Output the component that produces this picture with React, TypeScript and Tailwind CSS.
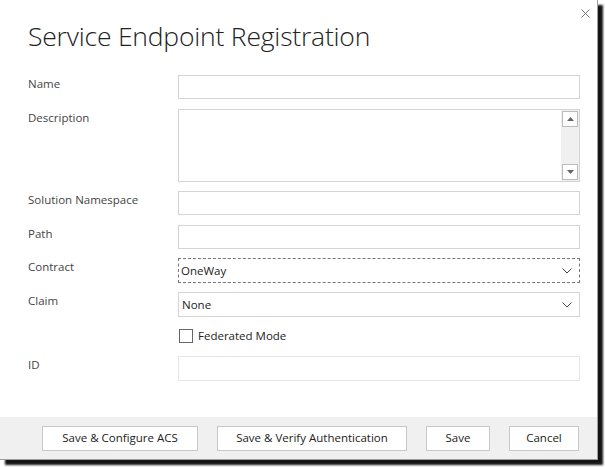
const Chevron = () => (
  <svg width="10" height="6" viewBox="0 0 10 6" className="shrink-0">
    <path d="M0.5 0.5 L5 5 L9.5 0.5" fill="none" stroke="#444" strokeWidth="1" />
  </svg>
);

const Field = ({ label, children, top }: { label: string; children: React.ReactNode; top: string }) => (
  <div className={`flex ${top}`}>
    <div className="w-[150px] shrink-0 pt-[1px] text-[11.5px] text-[#444] leading-[16px]">{label}</div>
    <div className="w-[402px] shrink-0">{children}</div>
  </div>
);

export default function App() {
  return (
    <div className="w-[605px] h-[467px] bg-white" style={{ fontFamily: '"Segoe UI", "Open Sans", "Noto Sans", sans-serif' }}>
      <div className="w-[598px] h-[460px] bg-white border-r border-b border-[#a0a0a0] shadow-[5px_5px_2px_rgba(0,0,0,0.92)] flex flex-col">
        <div className="flex-1 relative pl-[28px] pr-[17px]">
          <svg width="9" height="9" viewBox="0 0 9 9" className="absolute top-[9px] right-[7px]">
            <path d="M0.5 0.5 L8.5 8.5 M8.5 0.5 L0.5 8.5" stroke="#777" strokeWidth="1" />
          </svg>
          <h1 className="pt-[18px] text-[26.5px] font-light text-[#222] leading-[36px] tracking-[-0.2px]">
            Service Endpoint Registration
          </h1>
          <Field label="Name" top="mt-[21px]">
            <div className="h-[24px] border border-[#d4d4d4] bg-white" />
          </Field>
          <Field label="Description" top="mt-[10px]">
            <div className="h-[73px] border border-[#d4d4d4] bg-white flex justify-end">
              <div className="w-[18px] bg-[#f0f0f0] flex flex-col justify-between items-center py-[1px]">
                <div className="w-[16px] h-[16px] border border-[#bcbcbc] bg-white flex items-center justify-center">
                  <svg width="7" height="4" viewBox="0 0 7 4"><path d="M0 4 L3.5 0 L7 4 Z" fill="#666" /></svg>
                </div>
                <div className="w-[16px] h-[16px] border border-[#bcbcbc] bg-white flex items-center justify-center">
                  <svg width="7" height="4" viewBox="0 0 7 4"><path d="M0 0 L3.5 4 L7 0 Z" fill="#666" /></svg>
                </div>
              </div>
            </div>
          </Field>
          <Field label="Solution Namespace" top="mt-[9px]">
            <div className="h-[24px] border border-[#d4d4d4] bg-white" />
          </Field>
          <Field label="Path" top="mt-[10px]">
            <div className="h-[24px] border border-[#d4d4d4] bg-white" />
          </Field>
          <Field label="Contract" top="mt-[9px]">
            <div className="h-[25px] border border-dashed border-[#777] bg-white flex items-center justify-between pl-[2px] pr-[7px] text-[11.5px] text-[#222]">
              <span>OneWay</span>
              <Chevron />
            </div>
          </Field>
          <Field label="Claim" top="mt-[9px]">
            <div className="h-[25px] border border-[#d4d4d4] bg-white flex items-center justify-between pl-[3px] pr-[7px] text-[11.5px] text-[#222]">
              <span>None</span>
              <Chevron />
            </div>
          </Field>
          <div className="flex mt-[11px]">
            <div className="w-[150px]" />
            <label className="flex items-center gap-[5px] text-[11.5px] text-[#222] leading-[16px]">
              <span className="w-[14px] h-[14px] border border-[#666] bg-white ml-[1px]" />
              Federated Mode
            </label>
          </div>
          <Field label="ID" top="mt-[12px]">
            <div className="h-[25px] border border-[#e6e6e6] bg-white" />
          </Field>
        </div>
        <div className="h-[42px] bg-[#f0f0f0] flex items-center justify-end gap-[19px] pr-[18px] text-[11.5px] text-[#222]">
          <button className="w-[156px] h-[25px] bg-white border border-[#c8c8c8]">Save &amp; Configure ACS</button>
          <button className="w-[190px] h-[25px] bg-white border border-[#c8c8c8]">Save &amp; Verify Authentication</button>
          <button className="w-[64px] h-[25px] bg-white border border-[#c8c8c8]">Save</button>
          <button className="w-[70px] h-[25px] bg-white border border-[#c8c8c8]">Cancel</button>
        </div>
      </div>
    </div>
  );
}
